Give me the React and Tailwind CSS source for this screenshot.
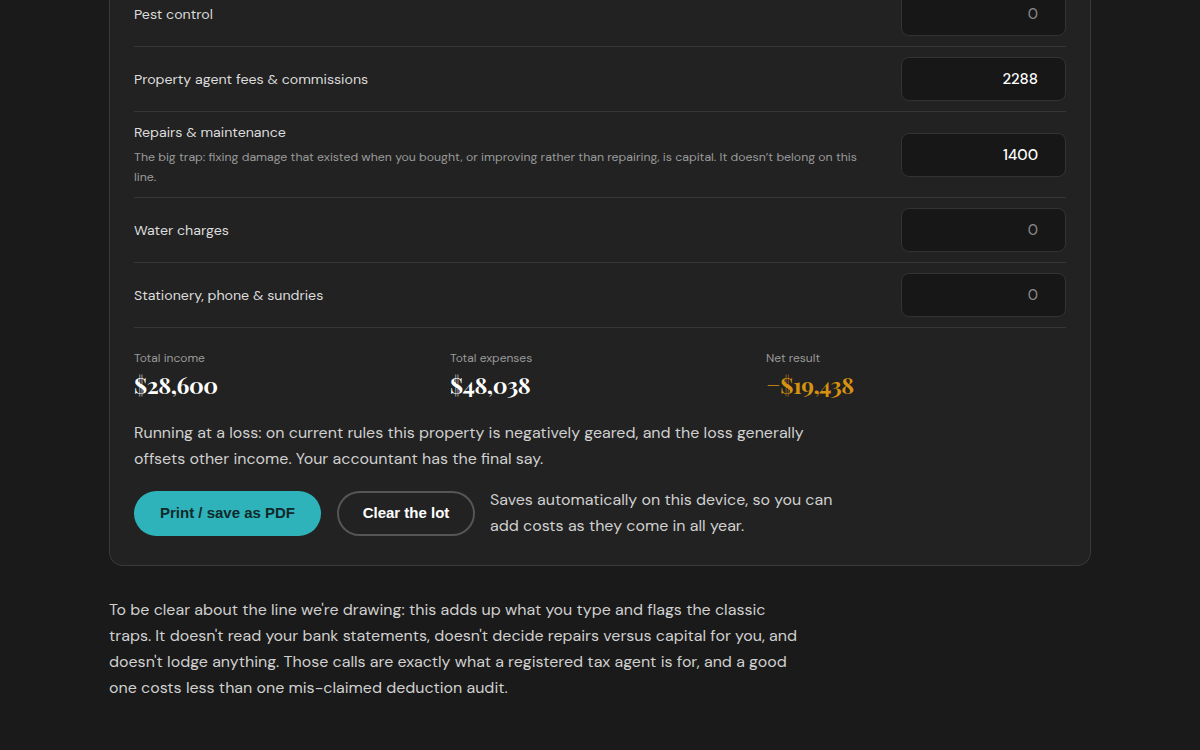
const rows = [
  { label: "Pest control", value: "0" },
  { label: "Property agent fees & commissions", value: "2288" },
  {
    label: "Repairs & maintenance",
    hint: "The big trap: fixing damage that existed when you bought, or improving rather than repairing, is capital. It doesn\u2019t belong on this line.",
    value: "1400",
  },
  { label: "Water charges", value: "0" },
  { label: "Stationery, phone & sundries", value: "0" },
];

const sans = "font-['DM_Sans','Lato','Noto_Sans',sans-serif]";
const serif = "font-['Playfair_Display','DejaVu_Serif','Liberation_Serif',serif]";

function ExpenseRow({ label, hint, value }) {
  const empty = value === "0";
  return (
    <div className="flex items-center gap-8 border-b border-[#363636] py-[10px]">
      <div className="flex-1">
        <div className="text-[14.2px] leading-5 text-[#dcdcdc]">{label}</div>
        {hint && (
          <p className="mt-[5px] text-[12.3px] leading-5 text-[#9a9a9a] max-w-[740px]">{hint}</p>
        )}
      </div>
      <input
        defaultValue={value}
        className={
          "h-[44px] w-[165px] rounded-lg border border-[#333] bg-[#171717] pl-4 pr-[27px] text-right text-[15px] outline-none " +
          (empty ? "text-[#8a8a8a]" : "text-white font-medium")
        }
      />
    </div>
  );
}

function Stat({ label, value, tone }) {
  return (
    <div>
      <div className="text-xs leading-5 text-[#9a9a9a]">{label}</div>
      <div className={serif + " mt-[3px] text-[23px] font-bold leading-7 tracking-[-0.02em] " + tone}>
        {value}
      </div>
    </div>
  );
}

export default function App() {
  return (
    <div className={"min-h-screen overflow-hidden bg-[#1a1a1a] " + sans}>
      <div className="mx-auto w-[982px] -mt-[18px] pb-[56px]">
        <div className="rounded-b-[14px] border border-t-0 border-[#393939] bg-[#222222] px-6 pb-[26px]">
          {rows.map((r) => (
            <ExpenseRow key={r.label} {...r} />
          ))}

          <div className="mt-[20px] grid grid-cols-3 gap-4">
            <Stat label="Total income" value="$28,600" tone="text-white" />
            <Stat label="Total expenses" value="$48,038" tone="text-white" />
            <Stat label="Net result" value="−$19,438" tone="text-[#d7920f]" />
          </div>

          <p className="mt-[21px] max-w-[690px] text-base leading-[26px] text-[#d0d0d0]">
            Running at a loss: on current rules this property is negatively geared, and the loss generally offsets other income. Your accountant has the final say.
          </p>

          <div className="mt-[15px] flex items-center gap-4">
            <button className="h-[45px] w-[187px] rounded-full bg-[#2fb3ba] font-['Liberation_Sans',Arial,sans-serif] text-[15px] font-bold text-[#10292b]">
              Print / save as PDF
            </button>
            <button className="h-[45px] w-[138px] rounded-full border-2 border-[#555] font-['Liberation_Sans',Arial,sans-serif] text-[15px] font-bold text-white">
              Clear the lot
            </button>
            <p className="-ml-[1px] max-w-[360px] text-base leading-[26px] text-[#d0d0d0]">
              Saves automatically on this device, so you can add costs as they come in all year.
            </p>
          </div>
        </div>

        <p className="mt-[31px] max-w-[695px] text-base leading-[26px] text-[#d0d0d0]">
          To be clear about the line we're drawing: this adds up what you type and flags the classic traps. It doesn't read your bank statements, doesn't decide repairs versus capital for you, and doesn't lodge anything. Those calls are exactly what a registered tax agent is for, and a good one costs less than one mis-claimed deduction audit.
        </p>
      </div>
    </div>
  );
}
